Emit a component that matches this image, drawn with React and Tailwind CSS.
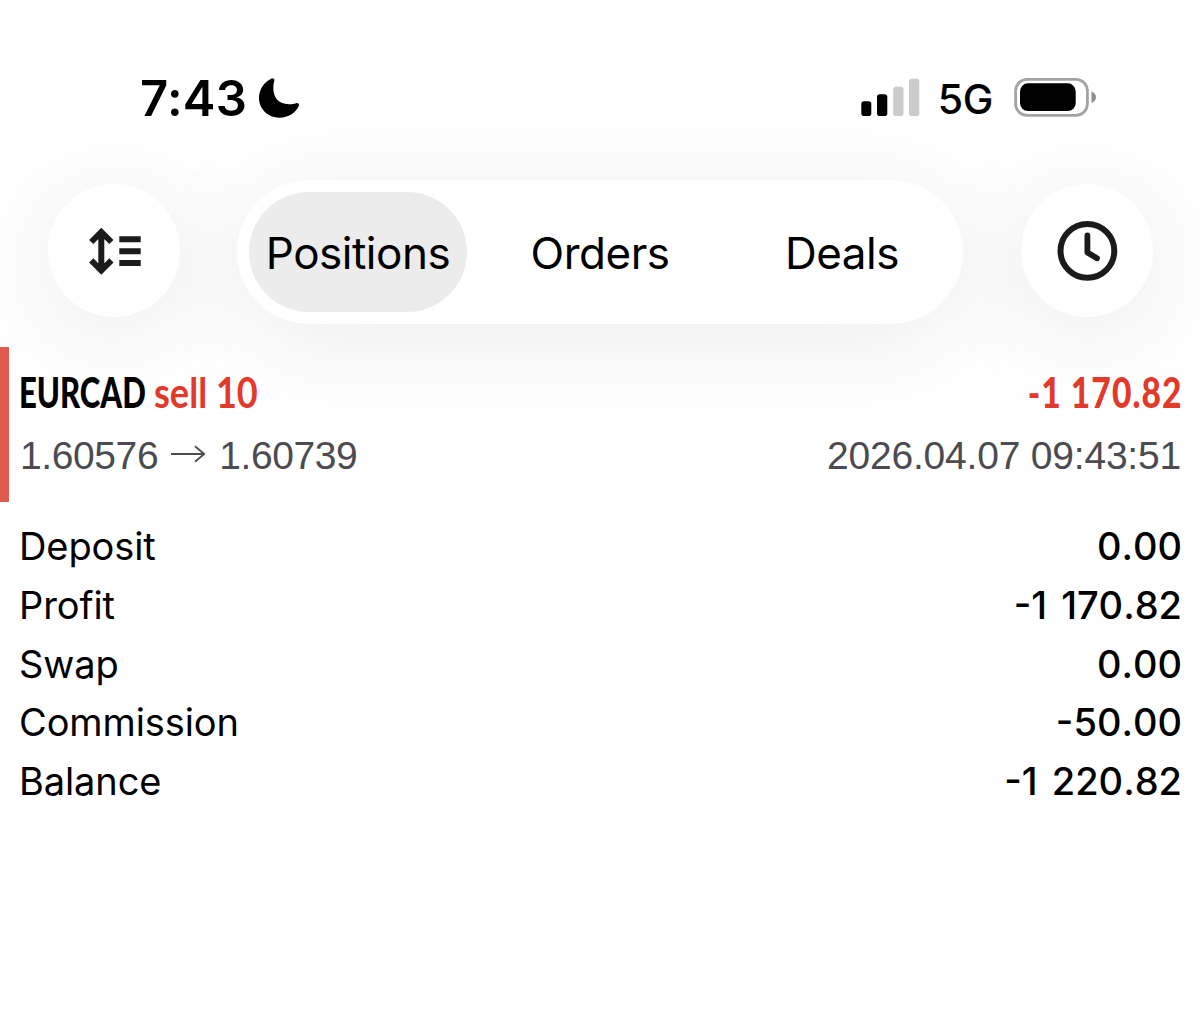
import React from 'react';

const tabs = ['Positions', 'Orders', 'Deals'];

const summary = [
    { label: 'Deposit', value: '0.00' },
    { label: 'Profit', value: '-1 170.82' },
    { label: 'Swap', value: '0.00' },
    { label: 'Commission', value: '-50.00' },
    { label: 'Balance', value: '-1 220.82' },
];

const MoonIcon = () => (
    <svg width="41" height="40" viewBox="0 0 41 40" className="ml-[12px]">
        <path d="M12.2 .7C13.8-.2 15.8.8 15.3 2.8 12.5 13 15 26.3 30 26.3 33 26.3 35 26 37 25.2 39 24.6 40.6 26 39.8 28 36.5 35 29.5 39.7 20.5 39.7 9 39.7 0 31 0 20 0 11.5 5 4 12.2.7Z" />
    </svg>
);

const SignalIcon = () => (
    <svg width="59" height="38" viewBox="0 0 59 38" className="mb-[2px]">
        <rect x="0.3" y="23.3" width="10" height="14.7" rx="2.8" />
        <rect x="16" y="16.3" width="10.3" height="21.7" rx="2.8" />
        <rect x="32.2" y="8.7" width="10.3" height="29.3" rx="2.8" fill="#cbcbcb" />
        <rect x="48" y="0.7" width="10.3" height="37.3" rx="2.8" fill="#cbcbcb" />
    </svg>
);

const BatteryIcon = () => (
    <svg width="83" height="40" viewBox="0 0 83 40" className="mb-[2px]">
        <rect x="1.6" y="2.3" width="71.8" height="36" rx="11.5" fill="none" stroke="#a3a3a3" strokeWidth="2.8" />
        <rect x="6" y="6.3" width="55.7" height="27.8" rx="8" />
        <path d="M77.5 14.6C80 15.6 82 17.7 82 20.2 82 22.8 80 25 77.5 26Z" fill="#8f8f8f" />
    </svg>
);

const StatusBar = () => (
    <div className="flex items-center justify-between h-[180px] pt-[15px] pl-[140px] pr-[103px]">
        <div className="flex items-center">
            <span className="mt-[2px] text-[49px] leading-none font-semibold tracking-[0.3px]">7:43</span>
            <MoonIcon />
        </div>
        <div className="flex items-center">
            <SignalIcon />
            <span className="ml-[18px] mr-[21px] mt-[3px] text-[41px] leading-none font-medium tracking-[-0.4px]">5G</span>
            <BatteryIcon />
        </div>
    </div>
);

const RoundButton = ({ label, children }) => (
    <button aria-label={label} className="w-[132px] h-[133px] mb-[3px] rounded-full bg-white shadow-[0_16px_110px_rgba(0,0,0,0.09)]">
        <svg width="132" height="133" viewBox="0 0 132 133" fill="none" stroke="#1b1b1b">
            {children}
        </svg>
    </button>
);

const Toolbar = () => (
    <div className="flex items-center gap-[57px] h-[144px] pl-[48px]">
        <RoundButton label="Sort">
            <path d="M53.3 48V86.4M43.2 58l10.1-10.1L63.4 58M43.2 76.4l10.1 10.1 10.1-10.1" strokeWidth="6" />
            <path d="M71.3 55.2h21.4M71.3 67.2h21.4M71.3 79.1h21.4" strokeWidth="6" />
        </RoundButton>
        <div className="grid grid-cols-3 w-[726px] h-[144px] mr-[1px] rounded-full bg-white shadow-[0_16px_110px_rgba(0,0,0,0.08)]">
            {tabs.map((tab, i) => (
                <button
                    key={tab}
                    className={`m-[12px] pt-[2px] text-[44px] leading-none tracking-[-0.5px] rounded-full ${i === 0 ? 'bg-[#ececec]' : ''}`}
                >
                    {tab}
                </button>
            ))}
        </div>
        <RoundButton label="History">
            <circle cx="66.4" cy="66.8" r="26.9" strokeWidth="6" />
            <path d="M66.4 51.5V68.5L76 74.3" strokeWidth="5.8" strokeLinecap="round" strokeLinejoin="round" />
        </RoundButton>
    </div>
);

const Position = () => (
    <div className="relative mt-[23px] h-[155px] border-l-[9px] border-[#df5b50] pl-[10px] pr-[19px] pt-[19px]">
        <div className="flex justify-between h-[52px] items-center font-['Lato'] font-black text-[42px] leading-none whitespace-nowrap">
            <div className="flex">
                <span className="w-[135px] origin-left">
                    <span className="inline-block origin-left scale-x-[0.74]">EURCAD</span>
                </span>
                <span className="origin-left scale-x-[0.86] font-bold text-[#e3392a]">sell 10</span>
            </div>
            <div className="mr-[-2px] origin-right scale-x-[0.8] text-[#e3392a] tracking-[1.3px]">-1 170.82</div>
        </div>
        <div className="flex justify-between items-center h-[40px] mt-[17px] pl-[1px] font-['Liberation_Sans'] text-[39px] leading-none text-[#4b4b50]">
            <div className="flex items-center">
                <span className="tracking-[-0.4px]">1.60576</span>
                <svg width="36" height="18" viewBox="0 0 36 18" className="mb-[2px] ml-[12px] mr-[13px]" fill="none" stroke="#4b4b50" strokeWidth="1.8">
                    <path d="M1 9H34M25 1.2L34.2 9 25 16.8" />
                </svg>
                <span className="tracking-[-0.4px]">1.60739</span>
            </div>
            <span className="tracking-[-0.2px]">2026.04.07 09:43:51</span>
        </div>
    </div>
);

const App = () => {
    return (
        <div className="w-[1200px] h-[1017px] overflow-hidden bg-white text-black font-['Inter',sans-serif]">
            <StatusBar />
            <Toolbar />
            <Position />
            <div className="mt-[15px] pl-[19px] pr-[18px]">
                {summary.map((row) => (
                    <div key={row.label} className="flex items-center justify-between h-[58.7px] text-[38px] leading-none">
                        <span className="tracking-[-0.1px]">{row.label}</span>
                        <span className="font-medium [font-kerning:none] [word-spacing:4px]">{row.value}</span>
                    </div>
                ))}
            </div>
        </div>
    );
};

export default App;
